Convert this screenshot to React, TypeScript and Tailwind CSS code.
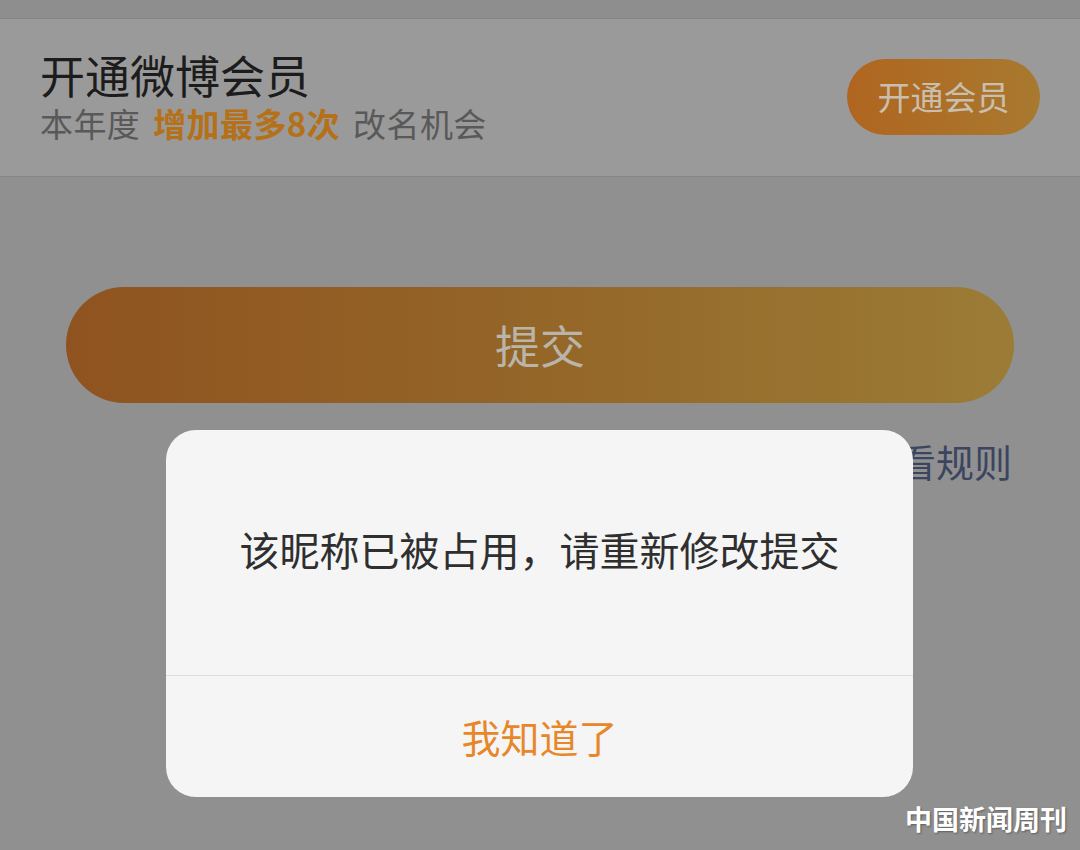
import React from "react";

const font = { fontFamily: '"Noto Sans CJK SC", "Noto Sans", sans-serif' };

export default function App() {
  return (
    <div
      className="relative w-[1080px] h-[850px] overflow-hidden bg-[#909090] flex flex-col"
      style={font}
    >
      <div className="h-[19px] bg-[#8e8e8e] border-b border-[#868686]" />

      <div className="h-[158px] bg-[#9a9a9a] border-b border-[#878787] flex items-center justify-between pl-[40px] pr-[40px]">
        <div className="flex flex-col gap-[7px] -mt-[2px]">
          <div className="text-[45px] leading-[45px] text-[#1c1c1c]">开通微博会员</div>
          <div className="text-[33px] leading-[38px] text-[#595959] tracking-[0.4px] flex">
            <span>本年度</span>
            <span className="ml-[13px] font-bold text-[#b57018]">增加最多8次</span>
            <span className="ml-[13px]">改名机会</span>
          </div>
        </div>
        <button className="w-[193px] h-[76px] rounded-full bg-gradient-to-r from-[#b0651f] to-[#a8792f] text-[33px] text-[#c9bfae] flex items-center justify-center -mt-[2px]">
          开通会员
        </button>
      </div>

      <div className="mt-[110px] mx-[66px] h-[116px] rounded-full bg-gradient-to-r from-[#8f5320] via-[#946628] to-[#9b7c36] flex items-center justify-center">
        <span className="text-[45px] text-[#bab5aa]">提交</span>
      </div>

      <div className="mt-[32px] pr-[68px] flex justify-end">
        <span className="text-[38px] leading-[52px] text-[#3b4560]">查看规则</span>
      </div>

      <div className="absolute left-[166px] top-[430px] w-[747px] h-[367px] rounded-[30px] bg-[#f5f5f5] flex flex-col overflow-hidden">
        <div className="h-[245px] flex items-center justify-center pb-[8px]">
          <span className="text-[40px] text-[#2f2f2f]">该昵称已被占用，请重新修改提交</span>
        </div>
        <div className="h-px bg-[#dcdcdc]" />
        <div className="flex-1 flex items-center justify-center">
          <span className="text-[39px] text-[#e8872a]">我知道了</span>
        </div>
      </div>

      <div className="absolute left-[905px] top-[799px] text-[27px] font-bold text-white [text-shadow:1px_1px_2px_rgba(0,0,0,0.35)]">
        中国新闻周刊
      </div>
    </div>
  );
}
